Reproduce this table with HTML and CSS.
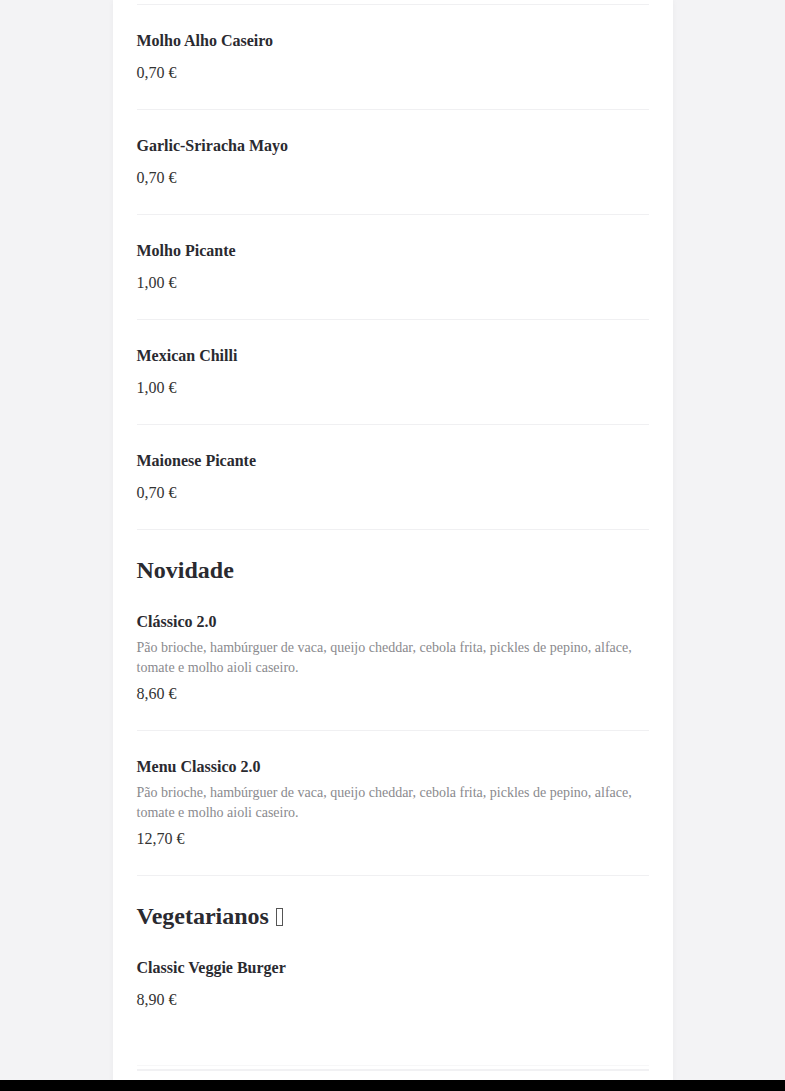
FILE: index.html
```html
<!DOCTYPE html>
<html lang="pt">
<head>
<meta charset="utf-8">
<title>Menu</title>
<link rel="stylesheet" href="styles.css">
</head>
<body>
<main class="card">
  <section class="section">
    <div class="item">
      <div class="name">Molho Alho Caseiro</div>
      <div class="price">0,70 €</div>
    </div>
    <div class="item">
      <div class="name">Garlic-Sriracha Mayo</div>
      <div class="price">0,70 €</div>
    </div>
    <div class="item">
      <div class="name">Molho Picante</div>
      <div class="price">1,00 €</div>
    </div>
    <div class="item">
      <div class="name">Mexican Chilli</div>
      <div class="price">1,00 €</div>
    </div>
    <div class="item">
      <div class="name">Maionese Picante</div>
      <div class="price">0,70 €</div>
    </div>
  </section>
  <section class="section">
    <h2 class="heading">Novidade</h2>
    <div class="item item-first">
      <div class="name">Clássico 2.0</div>
      <p class="desc">Pão brioche, hambúrguer de vaca, queijo cheddar, cebola frita, pickles de pepino, alface, tomate e molho aioli caseiro.</p>
      <div class="price price-after-desc">8,60 €</div>
    </div>
    <div class="item">
      <div class="name">Menu Classico 2.0</div>
      <p class="desc">Pão brioche, hambúrguer de vaca, queijo cheddar, cebola frita, pickles de pepino, alface, tomate e molho aioli caseiro.</p>
      <div class="price price-after-desc">12,70 €</div>
    </div>
  </section>
  <section class="section">
    <h2 class="heading">Vegetarianos <span class="tofu"></span></h2>
    <div class="item item-first item-tall">
      <div class="name">Classic Veggie Burger</div>
      <div class="price">8,90 €</div>
    </div>
    <div class="item-end"></div>
  </section>
</main>
<div class="bottom-bar"></div>
</body>
</html>
```

FILE: styles.css
```css
html, body {
  margin: 0;
  padding: 0;
}
body {
  background: #f3f3f5;
  font-family: "Liberation Serif", "Times New Roman", serif;
  color: #2a2a30;
  height: 1091px;
  overflow: hidden;
}
.card {
  width: 560px;
  box-sizing: border-box;
  margin: 0 auto;
  background: #fff;
  padding: 4px 24px 0;
  min-height: 1091px;
  box-shadow: 0 0 6px rgba(0, 0, 0, 0.04);
}
.section {
  display: flex;
  flex-direction: column;
}
.section:first-child .item:first-child {
  border-top: 1px solid #f0f0f2;
}
.heading {
  margin: 0;
  padding-top: 25px;
  padding-bottom: 1px;
  font-size: 24px;
  line-height: 30px;
  font-weight: bold;
  color: #2a2a30;
  display: flex;
  align-items: center;
}
.tofu {
  display: inline-block;
  width: 5px;
  height: 16px;
  border: 1px solid #555;
  margin-left: 7px;
  margin-top: 1px;
}
.item {
  padding: 25px 0 25px;
  border-bottom: 1px solid #f0f0f2;
}
.item-first {
  padding-top: 25px;
}
.item-tall {
  padding-bottom: 54px;
  border-bottom: 1px solid #f7f7f8;
}
.item-end {
  height: 3px;
  border-bottom: 2px solid #f1f1f3;
}
.name {
  font-size: 16px;
  line-height: 22px;
  font-weight: bold;
  color: #2a2a30;
}
.desc {
  margin: 5px 0 0;
  font-size: 14px;
  line-height: 20px;
  color: #8a8a8e;
}
.price {
  margin-top: 10px;
  font-size: 16px;
  line-height: 22px;
  color: #333;
}
.price-after-desc {
  margin-top: 5px;
}
.bottom-bar {
  position: fixed;
  left: 0;
  right: 0;
  bottom: 0;
  height: 11px;
  background: #000;
}
```
